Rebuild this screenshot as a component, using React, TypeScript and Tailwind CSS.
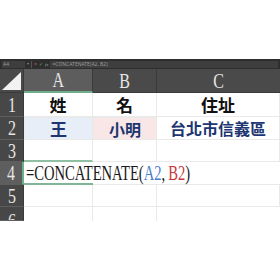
const serif = { fontFamily: '"Liberation Serif", "Times New Roman", serif' };

function ColHead({ label, active, last }: { label: string; active?: boolean; last?: boolean }) {
  return (
    <div
      className={`flex items-center justify-center text-[20px] text-[#e6e6e6] ${last ? "" : "border-r border-[#3a3a3a]"} ${
        active ? "bg-[#5d5d5d] border-b-2 border-b-[#6fae8a]" : "bg-[#4a4a4a] border-b border-b-[#3a3a3a]"
      }`}
      style={serif}
    >
      <span className="inline-block scale-x-[0.8]">{label}</span>
    </div>
  );
}

function RowHead({ n, active, cut }: { n: number; active?: boolean; cut?: boolean }) {
  return (
    <div
      className={`flex justify-center overflow-hidden text-[20px] leading-none text-[#e6e6e6] border-b border-[#5e5e5e] ${
        cut ? "items-start pt-[4px]" : "items-center"
      } ${active ? "bg-[#5e5e5e] border-r-2 border-r-[#6fae8a]" : "bg-[#474747] border-r border-r-[#3a3a3a]"}`}
      style={serif}
    >
      <span className="inline-block scale-x-[0.8]">{n}</span>
    </div>
  );
}

function Cell({ children, className = "" }: { children?: React.ReactNode; className?: string }) {
  return (
    <div className={`flex items-center justify-center border-r border-b border-[#e9e9e9] ${className}`}>{children}</div>
  );
}

const cjk = { fontFamily: '"Noto Sans CJK TC", "Noto Sans", sans-serif' };

export default function App() {
  return (
    <div className="w-[280px] h-[280px] bg-white overflow-hidden pt-[59px]">
      {/* formula bar */}
      <div className="flex h-[10px] items-center bg-[#2e2e2e] px-[2px] gap-[2px]">
        <div className="flex h-[7px] w-[23px] items-center bg-[#3e3e3e] px-[1px] text-[5px] leading-none text-[#9a9a9a]">A4</div>
        <span className="text-[4px] text-[#8a8a8a]">▾</span>
        <div className="h-[7px] w-px bg-[#555]" />
        <span className="text-[5px] leading-none text-[#c55]">×</span>
        <span className="text-[5px] leading-none text-[#5a5]">✓</span>
        <span className="text-[5px] italic leading-none text-[#999]" style={serif}>fx</span>
        <div className="flex h-[7px] flex-1 items-center bg-[#3e3e3e] px-[2px] text-[5px] leading-none text-[#9a9a9a]">
          =CONCATENATE(A2, B2)
        </div>
      </div>

      <div className="grid grid-cols-[24px_69px_64px_123px] grid-rows-[24px_24px_23px_22px_23px_22px_14px]">
        {/* corner */}
        <div className="flex items-end justify-end bg-[#4a4a4a] border-r border-b border-[#3a3a3a] p-[2px]">
          <svg width="19" height="18" viewBox="0 0 19 18">
            <polygon points="0,18 19,18 19,0" fill="#f2f2f2" />
          </svg>
        </div>
        <ColHead label="A" active />
        <ColHead label="B" />
        <ColHead label="C" last />

        <RowHead n={1} />
        <Cell><span className="text-[17px] font-bold text-[#111]" style={cjk}>姓</span></Cell>
        <Cell><span className="text-[17px] font-bold text-[#111]" style={cjk}>名</span></Cell>
        <Cell><span className="text-[17px] font-bold text-[#111]" style={cjk}>住址</span></Cell>

        <RowHead n={2} />
        <Cell className="bg-[#e8eef8] border border-[#8eaad8]">
          <span className="text-[17px] font-bold text-[#1d3570]" style={cjk}>王</span>
        </Cell>
        <Cell className="bg-[#f9e7e7] border border-[#d67b7b]">
          <span className="text-[16px] font-bold text-[#1d3570]" style={cjk}>小明</span>
        </Cell>
        <Cell>
          <span className="text-[16px] font-bold text-[#1d3570]" style={cjk}>台北市信義區</span>
        </Cell>

        <RowHead n={3} />
        <Cell className="border-b-2 border-b-[#8fc0a4]" />
        <Cell />
        <Cell />

        <RowHead n={4} active />
        <div className="relative border-b-2 border-[#7fb497]">
          <div
            className="absolute left-[2px] top-0 flex h-full items-center whitespace-nowrap text-[20px] leading-none text-[#1a1a1a] origin-left scale-x-[0.73]"
            style={serif}
          >
            =CONCATENATE(<span className="text-[#4a7cc9]">A2</span>, <span className="ml-[4px] text-[#c8383a]">B2</span>)
          </div>
        </div>
        <div className="border-b border-[#e9e9e9]" />
        <div className="border-b border-[#e9e9e9]" />

        <RowHead n={5} />
        <Cell />
        <Cell />
        <Cell />

        <RowHead n={6} cut />
        <div className="border-r border-[#e9e9e9]" />
        <div className="border-r border-[#e9e9e9]" />
        <div />
      </div>
    </div>
  );
}
